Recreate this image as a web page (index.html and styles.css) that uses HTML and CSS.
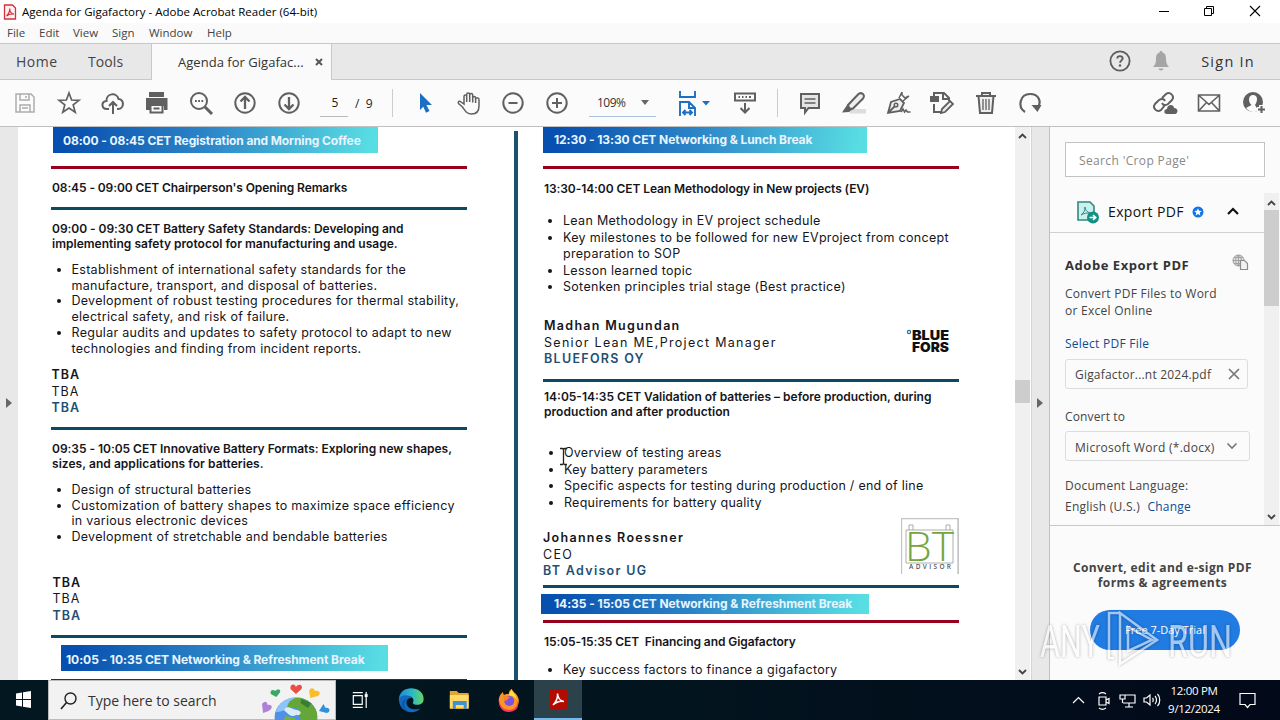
FILE: index.html
```html
<!DOCTYPE html>
<html lang="en">
<head>
<meta charset="utf-8">
<title>Agenda for Gigafactory - Adobe Acrobat Reader (64-bit)</title>
<link rel="stylesheet" href="styles.css">
</head>
<body>
<div class="desktop">
  <header class="titlebar">
    <svg class="app-icon" width="14" height="16" viewBox="0 0 14 16"><path d="M1.500 1h8L12.500 4v11h-11z" fill="#fff1f1" stroke="#d3303c" stroke-width="1.300"/><path d="M3.500 12c2-2 3.500-5 3.200-7.500C6.500 8 9 10 11 10.200 8.500 9.700 5.500 10.500 3.500 12z" fill="none" stroke="#d3303c" stroke-width="1.200"/></svg>
    <span class="title-text">Agenda for Gigafactory - Adobe Acrobat Reader (64-bit)</span>
    <div class="win-controls">
      <svg width="46" height="22"><path d="M19 10.500h10" stroke="#000"/></svg>
      <svg width="46" height="22"><path d="M18.500 7.500h7v7h-7zM20.500 7.500v-2h7v7h-2" fill="none" stroke="#000"/></svg>
      <svg width="46" height="22"><path d="M18 5l10 10M28 5l-10 10" stroke="#000" stroke-width="1.100"/></svg>
    </div>
  </header>
  <nav class="menubar"><span class="m-file">File</span><span class="m-edit">Edit</span><span class="m-view">View</span><span class="m-sign">Sign</span><span class="m-window">Window</span><span>Help</span></nav>
  <div class="tabs">
    <div class="tab-home">Home</div><div class="tab-tools">Tools</div>
    <div class="tab-doc"><span>Agenda for Gigafac...</span><svg width="8" height="8"><path d="M1 1l6 6M7 1l-6 6" stroke="#555" stroke-width="1.900"/></svg></div>
    <div class="account">
      <svg width="22" height="22" viewBox="0 0 22 22"><circle cx="11" cy="11" r="9.600" fill="none" stroke="#5c5c5c" stroke-width="1.800"/><path d="M8.300 8.500c.2-3.300 5.400-3 5.300 0 0 1.800-2.500 2-2.500 4.300" fill="none" stroke="#5c5c5c" stroke-width="1.900"/><circle cx="11" cy="15.500" r="1.200" fill="#5c5c5c"/></svg>
      <svg class="bell" width="18" height="22" viewBox="0 0 18 22"><path d="M9 1c1 0 1.500.6 1.500 1.500C13.500 3.500 14 6 14 9c0 4 1 6 3 8H1c2-2 3-4 3-8 0-3 .5-5.500 3.500-6.500C7.500 1.600 8 1 9 1zM6.500 18.500h5c-.5 2.600-4.500 2.600-5 0z" fill="#a5a5a5"/></svg>
      <span class="signin">Sign In</span>
    </div>
  </div>
  <div class="toolbar">
    <svg class="tool light" viewBox="0 0 28 28"><path d="M5 5h15l3 3v15H5zM9 5v6h9V5M9 23v-7h10v7M11 19h6M15 7v2"/></svg>
    <svg class="tool star-tool" viewBox="0 0 28 28"><path d="M14 4l2.600 7 7.400.3-5.800 4.600 2 7.300-6.200-4.200-6.200 4.200 2-7.300L4 11.300l7.400-.3z"/></svg>
    <svg class="tool" viewBox="0 0 28 28"><path d="M10 20H8c-6 0-6-8-.5-8C7 4 18 3 19.500 10c6 0 6 10-.5 10h-1M14 25V13M10 17l4-4 4 4" stroke-width="2"/></svg>
    <svg class="tool" viewBox="0 0 28 28"><path class="solid" d="M6 3h15v5H6zM3 9h21.500v12H21v-4H7v4H3z"/><path d="M7.500 16h12v7.500h-12zM10.500 19.500h6" fill="#fbfbfb" stroke-width="2"/></svg>
    <svg class="tool" viewBox="0 0 28 28"><circle cx="12" cy="12" r="8"/><path d="M18 18l7 7" stroke-width="3"/><path d="M8 12h1.800M11.200 12H13M14.400 12h1.800"/></svg>
    <svg class="tool" viewBox="0 0 28 28"><circle cx="14" cy="14" r="9.700"/><path d="M14 20V8M9.500 12.500L14 8l4.500 4.500" stroke-width="2.300"/></svg>
    <svg class="tool" viewBox="0 0 28 28"><circle cx="14" cy="14" r="9.700"/><path d="M14 8v12M9.500 15.500L14 20l4.500-4.500" stroke-width="2.300"/></svg>
    <div class="page-no"><span class="page-current">5</span><span class="page-total">/&nbsp; 9</span></div>
    <i class="sep"></i>
    <svg class="tool blue first" viewBox="0 0 28 28"><path class="solid" d="M9 4l12 12h-5.500l3 6-3.500 1.700-2.700-6L9 21z"/></svg>
    <svg class="tool hand" viewBox="0 0 28 28"><path d="M8.500 18L4.500 14.500c-1-2 1-3 2.500-1.500L10 15V7.500c0-2 2.700-2 2.700 0V13 5.500c0-2 3-2 3 0V13 6c0-2 3-2 3 0v7.500V9c0-2 2.900-2 2.900 0L24 9c1 0 1 1 1 2v6c0 5-2 8-7.300 8-5 0-6.300-3-9.200-7zM21.600 9v5" stroke-width="1.500"/></svg>
    <svg class="tool" viewBox="0 0 28 28"><circle cx="14" cy="14" r="9.700"/><path d="M9.500 14h9"/></svg>
    <svg class="tool" viewBox="0 0 28 28"><circle cx="14" cy="14" r="9.700"/><path d="M9 14h10M14 9v10"/></svg>
    <div class="zoom-box"><span>109%</span><i class="caret"></i></div>
    <svg class="tool blue fit" viewBox="0 0 36 28"><path d="M6 2v6h15V2M6 27V13h9l6 6v8M15 13v6h6M9 23.500h9M11.500 21L9 23.500l2.500 2.500M15.500 21l2.500 2.500-2.500 2.500" stroke-width="1.900"/><path class="solid" d="M28 12h8l-4 4.500z"/></svg>
    <svg class="tool keys" viewBox="0 0 28 28"><path d="M4 4.500h20v7H4z" stroke-width="2"/><path d="M7.500 8h1.500M11 8h1.500M14.500 8H16M18 8h2M14 14v9M9.500 19l4.500 4.500 4.500-4.500" stroke-width="2"/></svg>
    <i class="sep second"></i>
    <svg class="tool" viewBox="0 0 28 28"><path d="M5 5h18v14H12.500L9 23.500V19H5z" fill="#e5e5e5"/><path d="M8.500 10h11M8.500 14h11" stroke-width="1.400"/></svg>
    <svg class="tool" viewBox="0 0 28 28"><path d="M12 20h14v4.500H9z" fill="#ddd" stroke="none"/><path d="M8 16L18 5.500c3-3 8 0 5 4L13 19.500l-3.500.5z" fill="#eee"/><path class="solid" d="M7 16l5.500 4.500L9 23l-7 .5z"/></svg>
    <svg class="tool" viewBox="0 0 28 28"><path d="M4 24l3-11 9-3 4 4-4 8zM4 24l7-7" fill="#eee" stroke-width="1.800"/><path d="M15 9l3-6M19 12l6-5M18 3v3l3 3 4-2" stroke-width="1.500"/><circle cx="12" cy="16" r="1.800" stroke-width="1.500"/><path d="M17 23l2-3 1.500 3 1.500-2 1.500 2h3" stroke-width="1.600"/></svg>
    <svg class="tool" viewBox="0 0 28 28"><path class="solid" d="M2 7h9v6H2z"/><path d="M6 7V4h10l5 5v3M15 4v6h6M6 15v8h7"/><path d="M14 20l8-8 3 3-8 8-4 1z" fill="#eee" stroke-width="1.800"/></svg>
    <svg class="tool" viewBox="0 0 28 28"><path d="M4 7h20M10 7V4h8v3M6.500 7l1.500 17h12l1.500-17" fill="#eee"/><path d="M11 10v11M14 10v11M17 10v11" stroke-width="1.300"/></svg>
    <svg class="tool" viewBox="0 0 28 28"><path d="M9 23C1 18 4 5 14 5c9 0 12 8 7.500 14" stroke-width="2.200"/><path class="solid" d="M15.500 16h10l-4 7z"/></svg>
    <svg class="tool share" viewBox="0 0 28 28"><path d="M11 9l4-4c4-3 9 2 6 6l-4 4c-3 2-5 1-6-1M14 16l-4 5c-4 3-9-2-6-6l4-4c3-2 5-1 6 1"/><path class="solid" d="M16 25c-4 0-3-5 0-5 0-5 7-5 7-1 5 0 4 6 1 6z"/></svg>
    <svg class="tool" viewBox="0 0 28 28"><path d="M3.500 6h21v16h-21zM4 6.500l10 9 10-9M4 21.500l7.500-8M24 21.500l-7.500-8" stroke-width="1.600"/></svg>
    <svg class="tool user" viewBox="0 0 28 28"><circle cx="13" cy="13" r="10" class="solid"/><path d="M13 6c-5 0-5 7-1.500 10L6 19c4 5 9 5 12 2l-3-5c3-4 3-10-2-10z" fill="#fbfbfb" stroke="none"/><path d="M17 20.500h9M21.500 16v9" stroke="#fbfbfb" stroke-width="5"/><path d="M18 20.500h7M21.500 17v7"/></svg>
  </div>

  <main class="workspace">
    <div class="gutter left"><i class="tri"></i></div>
    <section class="page">
      <div class="col col-left">
        <div class="banner b-registration">08:00 - 08:45 CET Registration and Morning Coffee</div>
        <i class="rule red"></i>
        <h3 class="h-opening">08:45 - 09:00 CET Chairperson's Opening Remarks</h3>
        <i class="rule after-opening"></i>
        <h3 class="h-safety">09:00 - 09:30 CET Battery Safety Standards: Developing and<br><span>implementing safety protocol for manufacturing and usage.</span></h3>
        <ul class="list">
          <li>Establishment of international safety standards for the<br>manufacture, transport, and disposal of batteries.</li>
          <li>Development of robust testing procedures for thermal stability,<br>electrical safety, and risk of failure.</li>
          <li>Regular audits and updates to safety protocol to adapt to new<br>technologies and finding from incident reports.</li>
        </ul>
        <div class="speaker tba"><b>TBA</b><span>TBA</span><b class="org">TBA</b></div>
        <i class="rule after-tba"></i>
        <h3 class="h-formats">09:35 - 10:05 CET Innovative Battery Formats: Exploring new shapes,<br><span>sizes, and applications for batteries.</span></h3>
        <ul class="list">
          <li>Design of structural batteries</li>
          <li>Customization of battery shapes to maximize space efficiency<br>in various electronic devices</li>
          <li>Development of stretchable and bendable batteries</li>
        </ul>
        <div class="speaker tba second-tba"><b>TBA</b><span>TBA</span><b class="org">TBA</b></div>
        <i class="rule after-tba"></i>
        <div class="banner b-morning">10:05 - 10:35 CET Networking &amp; Refreshment Break</div>
        <i class="rule red end"></i>
      </div>
      <i class="divider"></i>
      <div class="col col-right">
        <div class="banner b-lunch">12:30 - 13:30 CET Networking &amp; Lunch Break</div>
        <i class="rule red"></i>
        <h3 class="h-lean">13:30-14:00 CET Lean Methodology in New projects (EV)</h3>
        <ul class="list l-lean">
          <li>Lean Methodology in EV project schedule</li>
          <li>Key milestones to be followed for new EVproject from concept<br>preparation to SOP</li>
          <li>Lesson learned topic</li>
          <li>Sotenken principles trial stage (Best practice)</li>
        </ul>
        <div class="speaker-row">
          <div class="speaker madhan"><b>Madhan Mugundan</b><span>Senior Lean ME,Project Manager</span><b class="org">BLUEFORS OY</b></div>
          <svg class="bluefors" width="46" height="26" viewBox="0 0 46 26"><circle cx="3" cy="4" r="1.600" fill="none" stroke="#2c6e9a" stroke-width="1.200"/><text x="6" y="11.500" textLength="37" lengthAdjust="spacingAndGlyphs">BLUE</text><text x="6" y="24" textLength="37" lengthAdjust="spacingAndGlyphs">FORS</text></svg>
        </div>
        <i class="rule after-madhan"></i>
        <h3 class="h-valid">14:05-14:35 CET Validation of batteries – before production, during<br><span>production and after production</span></h3>
        <ul class="list l-valid">
          <li>Overview of testing areas</li>
          <li>Key battery parameters</li>
          <li>Specific aspects for testing during production / end of line</li>
          <li>Requirements for battery quality</li>
        </ul>
        <div class="speaker-row johannes-row">
          <div class="speaker johannes"><b>Johannes Roessner</b><span>CEO</span><b class="org">BT Advisor UG</b></div>
          <svg class="bt" width="58" height="58" viewBox="0 0 58 58"><path d="M.5 56V.5h57V56M57 0v56" fill="none" stroke="#c4c4c4" stroke-width="1.400"/><path d="M8 12h44v33H5V12h3V7h4v5M45 12V7h4v5" fill="none" stroke="#999" stroke-width=".8"/><text class="bt-big" x="4" y="43" textLength="49" lengthAdjust="spacingAndGlyphs">BT</text><text class="bt-small" x="8" y="51" textLength="42">ADVISOR</text></svg>
        </div>
        <i class="rule after-johannes"></i>
        <div class="banner b-afternoon">14:35 - 15:05 CET Networking &amp; Refreshment Break</div>
        <i class="rule red afternoon"></i>
        <h3 class="h-finance">15:05-15:35 CET&nbsp; Financing and Gigafactory</h3>
        <ul class="list l-finance"><li>Key success factors to finance a gigafactory</li></ul>
      </div>
      <svg class="text-cursor" width="9" height="19" viewBox="0 0 9 19"><path d="M1 1.500h2.500l1 1 1-1H8M4.500 2v15M1 17.500h2.500l1-1 1 1H8" fill="none" stroke="#222" stroke-width="1.300"/></svg>
    </section>
    <div class="scrollbar doc-scroll"><svg width="9" height="6"><path d="M1 5l3.500-3.500L8 5" fill="none" stroke="#444" stroke-width="1.800"/></svg><i class="thumb"></i><svg class="down" width="9" height="6"><path d="M1 1l3.500 3.500L8 1" fill="none" stroke="#444" stroke-width="1.800"/></svg></div>
    <div class="gutter right"><i class="tri"></i></div>
    <aside class="panel">
      <div class="search">Search 'Crop Page'</div>
      <div class="panel-scroll">
        <div class="panel-body">
          <div class="export-head">
            <svg width="24" height="24" viewBox="0 0 24 24"><path d="M2 2h12l4 4v14H2z" fill="#c9f1ef" stroke="#33877f" stroke-width="1.600"/><path d="M5 15c3-2 4-5 4-8 0 3 2 5 5 6-3 0-6 0-9 2z" fill="none" stroke="#33877f"/><circle cx="17" cy="17.500" r="6" fill="#158e84"/><path d="M13.500 17.500h6M17 15l2.700 2.500L17 20" fill="none" stroke="#fff" stroke-width="1.700"/></svg>
            <span>Export PDF</span>
            <svg class="star" width="12" height="12" viewBox="0 0 12 12"><circle cx="6" cy="6" r="5.500" fill="#1473e6"/><path d="M6 2.300l1.100 2.500 2.700.2-2.100 1.700.7 2.700L6 8 3.600 9.400l.7-2.700L2.200 5l2.700-.2z" fill="#fff"/></svg>
            <svg class="chev" width="14" height="9"><path d="M2 7l5-5 5 5" fill="none" stroke="#111" stroke-width="2.200"/></svg>
          </div>
          <div class="adobe-row"><span>Adobe Export PDF</span><svg width="17" height="17" viewBox="0 0 17 17"><circle cx="6.500" cy="6.500" r="5.500" fill="#ddd" stroke="#999"/><path d="M1 6.500h11M6.500 1v11M6.500 1c-4 4-4 7 0 11M6.500 1c4 4 4 7 0 11M2 3.500h9M2 9.500h9" fill="none" stroke="#999" stroke-width=".8"/><path d="M8.500 6.500h4l3 3v6h-7z" fill="#f2f2f2" stroke="#8c8c8c" stroke-width="1.200"/></svg></div>
          <p class="desc">Convert PDF Files to Word<br>or Excel Online</p>
          <a class="select-file">Select PDF File</a>
          <div class="file-box"><span>Gigafactor...nt 2024.pdf</span><svg width="12" height="12"><path d="M1 1l10 10M11 1L1 11" stroke="#777" stroke-width="1.700"/></svg></div>
          <div class="convert">Convert to</div>
          <div class="file-box select"><span>Microsoft Word (*.docx)</span><svg width="12" height="8"><path d="M1.500 1.500L6 6l4.500-4.500" fill="none" stroke="#777" stroke-width="1.600"/></svg></div>
          <div class="lang">Document Language:</div>
          <div class="lang-value">English (U.S.) <a>Change</a></div>
        </div>
        <div class="scrollbar panel-bar"><svg width="9" height="6"><path d="M1 5l3.500-3.500L8 5" fill="none" stroke="#444" stroke-width="1.800"/></svg><i class="thumb"></i><svg class="down" width="9" height="6"><path d="M1 1l3.500 3.500L8 1" fill="none" stroke="#444" stroke-width="1.800"/></svg></div>
      </div>
      <div class="promo">
        <strong>Convert, edit and e-sign PDF<br>forms &amp; agreements</strong>
        <div class="trial">Free 7-Day Trial</div>
      </div>
    </aside>
  </main>

  <footer class="taskbar">
    <svg class="start" width="48" height="40"><path d="M16 13.500l6-1V19h-6zM23 12.300l8-1.200V19h-8zM16 20h6v6.500l-6-1zM23 20h8v7.900l-8-1.200z" fill="#fff"/></svg>
    <div class="task-search">
      <svg width="17" height="18" viewBox="0 0 17 18"><circle cx="10.500" cy="6.500" r="5.500" fill="none" stroke="#222" stroke-width="1.400"/><path d="M6.500 10.500L1 17" stroke="#222" stroke-width="1.600"/></svg>
      <span>Type here to search</span>
      <svg class="earth" width="68" height="38" viewBox="0 0 62 38" preserveAspectRatio="none">
        <defs><clipPath id="globe"><circle cx="31" cy="35" r="19.500"/></clipPath></defs>
        <circle cx="31" cy="35" r="19.500" fill="#5290e8"/>
        <g clip-path="url(#globe)"><path d="M12 30c6-12 10-15 20-15-6 7-9 15-20 15z" fill="#8fc3fa"/><path d="M23 25c1-9 12-12 19-7 7 3 11 16 7 20H36l-4-7 2-4-6-2z" fill="#64a737"/><path d="M20 28c4-6 7 0 12 0 5 1 4 6-1 5-4 3-7-1-11-5z" fill="#d8edf8"/><path d="M36 17l9 4-3 5-7-5z" fill="#387d37"/><path d="M21 34l9 2 2 3H20z" fill="#79b33b"/></g>
        <path d="M31 12l-5-5c-1-5 4-6 5-2 2-4 7-2 5 2z" fill="#eb4e43"/><path d="M13 15L8 12c-1-4 2-5 4-3 3-3 6-1 4 2z" fill="#38a963"/><path d="M44 16l-1-7c1-4 5-3 5 0 5-1 6 3 3 5z" fill="#f8bd27"/><path d="M1 31l-1-9c3-4 5-2 5 1 5-1 5 4 1 6z" fill="#af80d8"/><path d="M52 29l4-7 2 4c4-1 5 4 1 5z" fill="#3092dc"/>
      </svg>
    </div>
    <svg class="task-item" viewBox="0 0 50 40"><path d="M18.500 15.500h9v9h-9zM18 12.500h10M18 27.500h10M31.500 12v2M31.500 17v11" fill="none" stroke="#fff" stroke-width="1.200"/><path d="M30 14h3v3h-3z" fill="#fff"/></svg>
    <svg class="task-item edge" viewBox="0 0 50 40"><defs><linearGradient id="edge" x1="0" x2="1"><stop stop-color="#2088d8"/><stop offset=".55" stop-color="#2bbac5"/><stop offset="1" stop-color="#69d65f"/></linearGradient></defs><path d="M13 20c0-16 25-15 25-1 0 7-9 7-11 4 2-3 0-7-5-7-5 0-9 2-9 6z" fill="url(#edge)"/><path d="M13 19c2-5 11-5 13-1-7-1-7 9 0 11 4 1 8 0 9-1-6 8-22 5-22-9z" fill="#1269bd"/><path d="M21 19c-6 4-2 13 5 13-9 0-13-11-5-13z" fill="#0d4e9d"/></svg>
    <svg class="task-item" viewBox="0 0 50 40"><path d="M15 11h7l2 2h10v16H15z" fill="#dda82c"/><path d="M15 15h19v13H15z" fill="#ffda68"/><path d="M18 21h14v8h-3v-4h-8v4h-3z" fill="#4191cf"/></svg>
    <svg class="task-item" viewBox="0 0 50 40"><path d="M14 20c0-4 2-6 4-8l1 3c2-1 3-1 5-1 0-2 1-4 3-5 1 3 6 5 7 10 1 6-3 12-10 12-6 0-10-5-10-11z" fill="#ff9425"/><path d="M27 9c0 4 5 5 5 11-2-4-5-4-8-5z" fill="#ffe246"/><path d="M14 18c0 5 3 12 10 12 6 0 9-4 9-9 2 6-2 11-9 11S13 26 14 18z" fill="#ff365d"/><circle cx="24.500" cy="21" r="5" fill="#7953e0"/><path d="M18 16c3-1 5 1 8 1-3 1-3 4-6 4z" fill="#ff8220"/></svg>
    <svg class="task-item active" viewBox="0 0 48 38"><rect x="15" y="9" width="18" height="20" rx="2" fill="#b30b00"/><path d="M19 25c3-3 5-7 4.500-11.500C24 19 27 21 30 21.500c-4-.8-8 .7-11 3.500z" fill="none" stroke="#fff" stroke-width="1.500"/></svg>
    <div class="tray">
      <svg width="94" height="20" viewBox="0 0 94 20"><g fill="none" stroke="#fff" stroke-width="1.200"><path d="M1 13l5.500-5.500L12 13M27 7h7v8h-7zM34 10l3-1.500v5L34 12M27 4c2-1.500 5-1.500 7 0M27 18c2 1.500 5 1.500 7 0M51 5h12v8H51M57 13v4M53 17h8M48 5h5v4h-5zM50.500 9v4M72 8h2.500l3.500-3v10l-3.500-3H72zM80.500 8c1 1 1 3 0 4M83 6c2 2 2 6 0 8M85.500 4c3 3 3 9 0 12"/></g></svg>
      <div class="clock">12:00 PM<br>9/12/2024</div>
      <svg class="notice" width="17" height="17"><path d="M1 1.500h15v11h-5l-2.500 3-2.500-3H1z" fill="none" stroke="#fff" stroke-width="1.200"/></svg>
    </div>
  </footer>

  <svg class="watermark" width="200" height="72" viewBox="0 0 200 72"><text x="2" y="51" textLength="60" lengthAdjust="spacingAndGlyphs">ANY</text><text x="130" y="51" textLength="64" lengthAdjust="spacingAndGlyphs">RUN</text><g fill="none" stroke="#fff" stroke-width="2.500"><path d="M82 7H71v45h5M82 7v51l37-24L82 7zM90 21v24l24-11z"/></g></svg>
</div>
</body>
</html>
```
FILE: styles.css
```css
* { box-sizing: border-box; }
body { margin: 0; font-family: "Open Sans", "Noto Sans", sans-serif; color: #444; }
svg { display: block; flex: none; }
i { display: block; flex: none; }
.desktop { position: relative; width: 1280px; height: 720px; overflow: hidden; display: flex; flex-direction: column; background: #fff; white-space: nowrap; }

.titlebar { height: 23px; display: flex; align-items: center; background: #fff; padding-left: 3px; }
.title-text { margin-left: 5px; font-size: 11.500px; color: #000; letter-spacing: .02px; }
.win-controls { display: flex; margin-left: auto; margin-right: 2px; }
.menubar { height: 20px; display: flex; background: #fafafa; padding-left: 7px; font-size: 11.500px; line-height: 20px; }
.m-file { width: 32px; } .m-edit { width: 34px; } .m-view { width: 39px; } .m-sign { width: 37px; } .m-window { width: 58px; }
.tabs { height: 37px; display: flex; background: #e8e8e8; border-top: 1px solid #c8c8c8; border-bottom: 1px solid #c8c8c8; font-size: 14px; line-height: 35px; }
.tab-home { width: 88px; padding-left: 16px; letter-spacing: .5px; }
.tab-tools { width: 63px; letter-spacing: .1px; }
.tab-doc { width: 181px; height: 36px; background: #fafafa; border-left: 1px solid #c8c8c8; border-right: 1px solid #c8c8c8; padding-left: 26px; display: flex; align-items: center; font-size: 13px; color: #333; letter-spacing: .03px; }
.tab-doc svg { margin-left: auto; margin-right: 8px; }
.account { display: flex; align-items: center; margin-left: auto; padding-right: 25px; color: #333; }
.account svg { margin-top: -2px; }
.account .bell { margin-left: 21px; }
.signin { margin-left: 31px; font-size: 14.500px; letter-spacing: 1.250px; }

.toolbar { height: 47px; display: flex; align-items: center; background: #fbfbfb; border-bottom: 1px solid #c0c0c0; padding-left: 3px; }
.tool { width: 28px; height: 28px; margin: 0 8px; fill: none; stroke: #606060; stroke-width: 2; }
.tool .solid, .tool.blue .solid { fill: #606060; stroke: none; }
.light { stroke: #adadad; stroke-width: 1.500; }
.star-tool { stroke-width: 1.700; }
.hand { margin: 0 9px 0 7px; }
.tool.blue { stroke: #1d6fc4; } .tool.blue .solid { fill: #1d6fc4; }
.page-no { width: 81px; height: 28px; display: flex; align-items: center; padding-left: 9px; font-size: 12px; color: #222; }
.page-current { width: 28px; height: 28px; line-height: 27px; text-align: center; border-bottom: 1px solid #bbb; padding-left: 2px; }
.page-total { margin-left: 7px; }
.sep { width: 1px; height: 28px; background: #ccc; margin-right: 10px; }
.zoom-box { width: 67px; height: 28px; margin-left: 10px; display: flex; align-items: center; border-bottom: 1px solid #aac4e0; font-size: 12px; color: #333; padding-left: 8px; letter-spacing: -.5px; }
.caret { margin-left: auto; margin-right: 7px; border: 4px solid transparent; border-top: 5px solid #666; border-bottom: 0; }
.tool.fit { width: 36px; margin: 0 0 0 18px; }
.tool.keys { margin: 0 0 0 21px; }
.sep.second { margin-left: 18px; }
.tool.share { margin-left: 99px; }
.tool.user { margin-left: 9px; }

.workspace { height: 553px; display: flex; overflow: hidden; }
.gutter { flex: none; width: 18px; background: #e8e8e8; padding-top: 271px; }
.tri { border: 5px solid transparent; border-left: 6px solid #666; border-right: 0; margin-left: 6px; }
.gutter.right { width: 19px; border-right: 1px solid #c0c0c0; border-left: 1px solid #d5d5d5; }
.gutter.right .tri { margin-left: 5px; }
.page { position: relative; width: 997px; flex: none; display: flex; padding-left: 33px; background: #fff; font-family: Inter, "Liberation Sans", sans-serif; color: #15151b; overflow: hidden; }
.col { width: 416px; flex: none; }
.divider { width: 4px; margin: 4px 25px 0 47px; background: #1b526f; }
.rule { height: 3px; background: #0b4b60; }
.rule.red { background: #99001d; margin-top: 13px; }
.banner { height: 26px; display: flex; align-items: center; padding-left: 11px; color: #e8f5ff; font-size: 12px; font-weight: 700; background: linear-gradient(100deg, #0850af 5%, #2d86c8 48%, #58dde3 97%); letter-spacing: -.06px; }
h3 { margin: 0; font-size: 12px; line-height: 15px; font-weight: 600; }
.list { list-style: none; margin: 11px 0 0 1px; padding: 0; font-size: 12.500px; line-height: 15.700px; letter-spacing: .28px; }
.list li { position: relative; padding-left: 19.500px; }
.list li::before { content: ""; position: absolute; left: 4.500px; top: 6px; width: 4px; height: 4px; border-radius: 50%; background: #15151b; }
.speaker { display: flex; flex-direction: column; font-size: 12.500px; line-height: 16.500px; letter-spacing: 1.300px; }
.speaker b { font-weight: 600; } .speaker .org { color: #1f4f73; }
.b-registration { width: 325px; margin-left: 2px; padding-left: 10px; padding-top: 1px; letter-spacing: -.11px; }
.h-opening { margin: 11px 0 0 1px; letter-spacing: -.1px; }
.after-opening { margin-top: 12px; }
.h-safety { margin: 11px 0 0 1px; letter-spacing: -.04px; }
.h-safety span { letter-spacing: .02px; }
.speaker.tba { margin: 10.800px 0 0 .5px; letter-spacing: 1px; }
.rule.after-tba { margin-top: 10.500px; }
.h-formats { margin: 11px 0 0 1px; letter-spacing: -.03px; }
.h-formats span { letter-spacing: .05px; }
.speaker.second-tba { margin: 29.700px 0 0 1.500px; }
.b-morning { width: 327px; margin: 7px 0 0 10px; padding-left: 5px; padding-top: 3px; }
.rule.red.end { margin-top: 8px; }
.b-lunch { width: 324px; padding-bottom: 1px; letter-spacing: -.08px; }
.h-lean { margin: 12px 0 0 1px; letter-spacing: -.08px; }
.col-right .list { line-height: 16.500px; letter-spacing: .26px; }
.col-right .list.l-lean { margin-top: 17px; margin-left: 0; padding-left: .5px; letter-spacing: .3px; }
.speaker-row { display: flex; justify-content: space-between; margin-top: 22px; }
.madhan { margin-left: 1px; padding-top: .5px; }
.bluefors { margin: 10px 7px 0 0; font: 900 13px Inter, sans-serif; fill: #101010; }
.rule.after-madhan { margin-top: 11.500px; }
.h-valid { margin: 7px 0 0 1px; }
.h-valid span { letter-spacing: .06px; }
.col-right .list.l-valid { margin-top: 26px; margin-left: 1px; padding-left: .5px; }
.johannes-row { margin-top: 7px; height: 61px; }
.johannes { margin-top: 12px; }
.bt-big { font: 300 40px "Open Sans", sans-serif; fill: #72a63e; }
.bt-small { font: 600 6.500px "Open Sans", sans-serif; fill: #555; }
.after-johannes { margin-top: 6px; }
.b-afternoon { width: 328px; height: 20px; margin: 6px 0 0 -2px; padding-left: 13px; padding-bottom: 1px; }
.rule.red.afternoon { margin-top: 6px; }
.h-finance { margin: 11px 0 0 1px; letter-spacing: -.08px; }
.col-right .list.l-finance { margin-top: 13px; margin-left: 0; padding-left: .5px; }
.text-cursor { position: absolute; left: 541px; top: 320px; }

.scrollbar { flex: none; width: 16px; background: #f0f0f0; display: flex; flex-direction: column; align-items: center; }
.thumb { width: 100%; background: #cdcdcd; }
.down { margin-top: auto; }
.doc-scroll { padding: 6px 0 5px; width: 15px; margin-right: 1px; } .doc-scroll .thumb { height: 23px; margin-top: 241px; }
.panel { width: 230px; flex: none; background: #fbfbfb; display: flex; flex-direction: column; }
.search { width: 200px; height: 35px; margin: 15px 0 16px 15px; border: 1px solid #c3c3c3; background: #fff; padding-left: 13px; line-height: 35px; font-size: 12px; color: #888; letter-spacing: .36px; }
.panel-scroll { height: 333px; display: flex; border-bottom: 1px solid #c8c8c8; font-size: 12px; letter-spacing: .25px; }
.panel-body { width: 214px; padding-left: 15px; }
.export-head { height: 40px; margin-left: -15px; padding: 0 0 2px 26px; display: flex; align-items: center; border-bottom: 1px solid #d0d0d0; color: #111; font-size: 14px; letter-spacing: .35px; }
.export-head span { margin-left: 8px; }
.star { margin-left: 8px; } .chev { margin-left: 22px; }
.adobe-row { height: 22px; margin-top: 20px; display: flex; font-size: 13px; font-weight: 700; line-height: 24px; color: #333; letter-spacing: .55px; }
.adobe-row svg { margin-left: auto; margin-right: 15px; margin-top: 1px; }
.desc { margin: 10px 0 0; line-height: 17px; letter-spacing: .26px; }
.select-file { display: block; margin-top: 16px; line-height: 18px; }
.panel-body a { color: #0d4d94; }
.file-box { width: 183px; height: 30px; margin-top: 6px; border: 1px solid #ddd; border-radius: 3px; display: flex; align-items: center; padding: 0 7px 0 9px; letter-spacing: .2px; }
.file-box svg { margin-left: auto; }
.convert { line-height: 17px; margin-top: 19px; letter-spacing: .15px; }
.file-box.select { width: 185px; margin-top: 6px; padding-right: 11px; padding-top: 2px; letter-spacing: .28px; }
.file-box.select svg { margin-top: -3px; }
.lang { margin-top: 16px; line-height: 18px; }
.lang-value { margin-top: 3px; line-height: 18px; letter-spacing: .25px; }
.lang-value a { margin-left: 4px; }
.panel-bar { padding: 7px 0 5px; width: 15px; } .panel-bar .thumb { height: 96px; margin-top: 4px; }
.promo { display: flex; flex-direction: column; align-items: center; padding: 34px 5px 0 0; }
.promo strong { font-size: 12px; line-height: 15px; text-align: center; letter-spacing: .4px; }
.trial { width: 150px; height: 40px; margin: 20px 0 0 5px; border-radius: 20px; background: #207be3; color: #fff; font-size: 11px; line-height: 39px; text-align: center; }

.taskbar { height: 40px; display: flex; align-items: center; background: linear-gradient(90deg, #02171f, #02151f 50%, #020919); color: #fff; }
.task-search { width: 288px; height: 40px; background: #f2f2f2; border: 1px solid #bbb; padding: 1px 5px 0 11px; display: flex; align-items: center; color: #333; font-size: 14px; margin-right: -1px; }
.task-search span { margin-left: 11px; letter-spacing: -.02px; }
.earth { margin-left: auto; }
.task-item { width: 49.500px; height: 40px; }
.task-item.edge { margin-left: 1px; }
.task-item.active { width: 48px; background: #2b424b; border-bottom: 2px solid #76b9ed; }
.tray { margin-left: auto; display: flex; align-items: center; height: 40px; padding-right: 24px; }
.clock { width: 62px; margin-left: -3px; font-size: 11.500px; line-height: 18px; text-align: center; letter-spacing: -.3px; }
.notice { margin-left: 14px; }
.watermark { position: absolute; left: 1038px; top: 606px; overflow: visible; opacity: .58; filter: drop-shadow(0 0 1.500px rgba(0, 0, 0, .5)); }
.watermark text { font: 400 45px Roboto, sans-serif; fill: #fff; }
```
